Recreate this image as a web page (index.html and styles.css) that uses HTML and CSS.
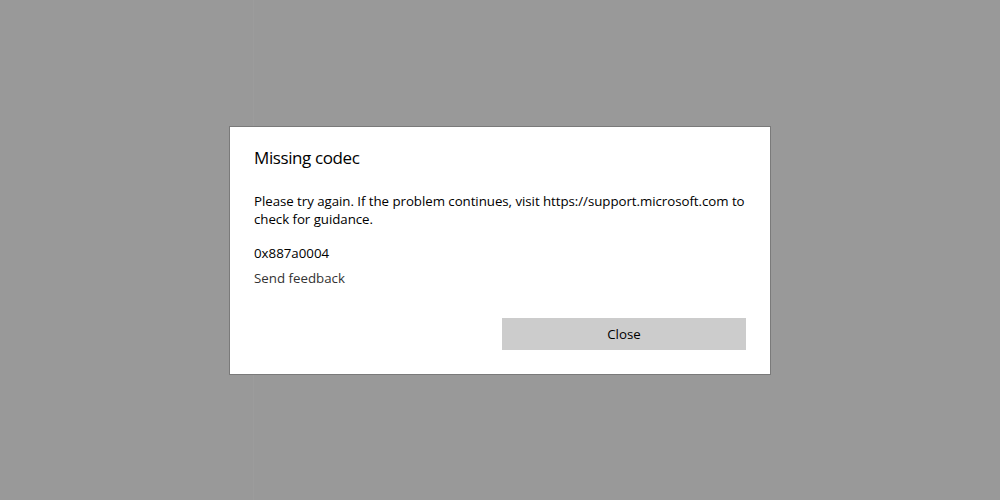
FILE: index.html
```html
<!DOCTYPE html>
<html lang="en">
<head>
<meta charset="utf-8">
<title>Missing codec</title>
<link rel="stylesheet" href="styles.css">
</head>
<body>
<div class="app">
  <div class="pane"></div>
  <div class="main"></div>
</div>
<div class="dialog" role="dialog" aria-labelledby="dlg-title">
  <h1 class="title" id="dlg-title">Missing codec</h1>
  <p class="message">Please try again. If the problem continues, visit https://support.microsoft.com to check for guidance.</p>
  <p class="code">0x887a0004</p>
  <a class="feedback">Send feedback</a>
  <div class="actions">
    <button class="btn" type="button">Close</button>
  </div>
</div>
</body>
</html>
```
FILE: styles.css
```css
html, body {
  margin: 0;
  padding: 0;
  height: 100%;
}
body {
  background: #999999;
  font-family: "Open Sans", "Noto Sans", sans-serif;
  color: #000;
  overflow: hidden;
}
.app {
  display: flex;
  height: 100%;
}
.pane {
  width: 253px;
  border-right: 1px solid #9c9c9c;
}
.main {
  flex: 1;
}
.dialog {
  position: absolute;
  left: 229px;
  top: 126px;
  width: 492px;
  height: 247px;
  padding: 0 24px;
  background: #fff;
  border: 1px solid #7a7a7a;
  display: flex;
  flex-direction: column;
}
.title {
  margin: 18px 0 0;
  font-size: 17px;
  letter-spacing: -0.4px;
  font-weight: 400;
  line-height: 26px;
}
.message {
  margin: 21px 0 0;
  font-size: 13.3px;
  letter-spacing: -0.05px;
  line-height: 18px;
}
.code {
  margin: 16px 0 0;
  font-size: 13.3px;
  line-height: 19px;
}
.feedback {
  margin-top: 6px;
  font-size: 13.3px;
  line-height: 19px;
  color: #333;
}
.actions {
  margin-top: auto;
  margin-bottom: 24px;
  display: flex;
  justify-content: flex-end;
}
.btn {
  width: 244px;
  height: 32px;
  border: 0;
  background: #cccccc;
  font-family: inherit;
  font-size: 13.3px;
  color: #000;
  padding: 0;
}
```
